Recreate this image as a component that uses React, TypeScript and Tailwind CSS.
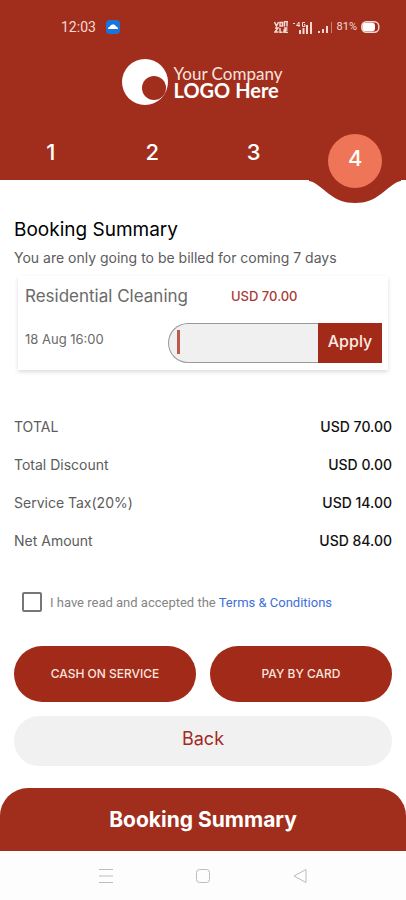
import { ReactNode } from "react";

const steps = [1, 2, 3];

const totals = [
  { label: "TOTAL", amount: "USD 70.00" },
  { label: "Total Discount", amount: "USD 0.00" },
  { label: "Service Tax(20%)", amount: "USD 14.00" },
  { label: "Net Amount", amount: "USD 84.00" },
];

function StatusBar() {
  return (
    <div className="flex h-[54px] items-center justify-between pl-[61px] pr-[26px] text-[#f6d9d2]">
      <div className="flex items-center gap-[10px]">
        <span className="font-[Roboto,sans-serif] text-sm">12:03</span>
        <svg width="14" height="14" viewBox="0 0 14 14" aria-hidden="true">
          <rect width="14" height="14" rx="4" fill="#1b74dc" />
          <path d="M2 9c0-1.500 1-2.300 2-2.500C4.600 5 5.700 4.500 7 4.500s2.400.5 3 2c1 .2 2 1 2 2.500z" fill="#fff" />
        </svg>
      </div>
      <div className="flex items-center gap-1">
        {/* VoLTE badge */}
        <svg width="14" height="12" viewBox="0 0 14 12" fill="none" stroke="currentColor" aria-hidden="true">
          <path d="M.5 1l2 4 2-4M6 1.500h2.500v3.500H6zM10.500 0v5.500M13 0v5.500M10 .6h4M1 7h3L1 11h3.500M6 7v4.300h2.500M10 7h3.500M11.500 7v4.500M13.500 9H10v2.500h4" strokeWidth="1.500" />
        </svg>
        {/* 4G signal */}
        <svg width="22" height="13" viewBox="0 0 22 13" aria-hidden="true">
          <g fill="none" stroke="currentColor" strokeWidth="1">
            <path d="M1 2.500h2M7 6V1L4.500 4.500H8M13 1.500h-2.500v4H13v-2h-1" />
          </g>
          <g fill="currentColor">
            <rect x="7" y="9" width="2" height="4" />
            <rect x="10.500" y="7" width="2" height="6" />
            <rect x="14" y="4" width="2" height="9" />
            <rect x="18" y="1" width="2" height="12" />
          </g>
        </svg>
        <svg width="15" height="13" viewBox="0 0 15 13" fill="currentColor" aria-hidden="true">
          <rect x="0" y="10" width="2" height="2" />
          <rect x="4" y="8" width="2" height="4" />
          <rect x="8" y="5" width="2" height="7" />
          <rect x="13" y="1" width="1" height="11" opacity=".5" />
        </svg>
        <span className="font-[Roboto,sans-serif] text-[11px]">81%</span>
        <svg width="19" height="12" viewBox="0 0 19 12" aria-hidden="true">
          <rect x=".8" y=".8" width="17" height="10.400" rx="4.500" fill="none" stroke="currentColor" strokeWidth="1.400" />
          <rect x="1.500" y="1.800" width="12.500" height="8.400" rx="3" fill="#fff" />
        </svg>
      </div>
    </div>
  );
}

function Logo() {
  return (
    <div className="flex h-14 items-center justify-center gap-[6px] text-white">
      <svg width="46" height="46" viewBox="0 0 46 46" aria-hidden="true">
        <circle cx="23" cy="23" r="23" fill="#fff" />
        <circle cx="32" cy="29" r="12" fill="#a12e1d" />
      </svg>
      <div className="pr-[2px] font-[Lato,sans-serif] leading-4">
        <div className="text-[17px] text-[#f9e3de]">Your Company</div>
        <div className="text-xl leading-4 font-bold">LOGO Here</div>
      </div>
    </div>
  );
}

function Steps() {
  return (
    <ol className="grid h-[70px] grid-cols-4 justify-items-center text-[22px] font-medium text-white">
      {steps.map((step) => (
        <li key={step} className="pt-7 leading-7">{step}</li>
      ))}
      <li className="relative pt-6" aria-current="step">
        {/* Notch below the header for the current step */}
        <svg className="absolute top-[70px] left-1/2 -translate-x-1/2" width="92" height="23" viewBox="0 0 92 23" aria-hidden="true">
          <path d="M0 0h92v1c-6 1-10 5-20 13-8 6-15 9-26 9s-18-3-26-9C10 6 6 2 0 1z" fill="#a12e1d" />
        </svg>
        <span className="relative flex size-[54px] justify-center rounded-full bg-[#ef7558] pt-[10px] leading-7">4</span>
      </li>
    </ol>
  );
}

function PayButton({ children }: { children: ReactNode }) {
  return (
    <button className="h-14 rounded-full bg-[#a12a18] text-xs font-medium text-[#fbe5df]">
      {children}
    </button>
  );
}

export default function App() {
  return (
    <div className="flex min-h-screen flex-col bg-white font-[Inter,sans-serif]">
      <header className="bg-[#a12e1d]">
        <StatusBar />
        <Logo />
        <Steps />
      </header>

      <main className="flex-1 px-[14px] pb-[22px] pt-9">
        <h1 className="text-[19px] leading-7 text-black">Booking Summary</h1>
        <p className="mt-1 text-sm leading-5 text-[#5c5c5c]">
          You are only going to be billed for coming 7 days
        </p>

        <section className="mx-1 mt-2 pb-[7px] pl-[7px] pr-[6px] text-[#6a6a6a] shadow-[0_2px_4px_rgba(0,0,0,0.14)]">
          <div className="grid h-[41px] grid-cols-[206px_1fr] items-center">
            <h2 className="text-[17px]">Residential Cleaning</h2>
            <span className="text-[13px] font-medium text-[#a83a36]">USD 70.00</span>
          </div>
          <div className="mt-[6px] flex h-10">
            <span className="w-[143px] shrink-0 pt-[6px] text-[13px] leading-5">18 Aug 16:00</span>
            <div className="relative min-w-0 flex-1">
              <input
                type="text"
                aria-label="Discount code"
                className="h-full w-full rounded-l-full border border-r-0 border-[#999] bg-[#f0f0f0] px-3 text-sm text-[#333] outline-none"
              />
              <span className="absolute top-[7px] left-[9px] h-6 w-[3px] bg-[#bd5a4e]" />
            </div>
            <button className="w-16 bg-[#a12a18] pb-1 text-base font-medium text-[#fdeae5]">Apply</button>
          </div>
        </section>

        <dl className="mt-[38px]">
          {totals.map((row) => (
            <div key={row.label} className="flex h-[38px] items-center justify-between">
              <dt className="text-sm text-[#5c5c5c]">{row.label}</dt>
              <dd className="text-sm font-medium text-[#111]">{row.amount}</dd>
            </div>
          ))}
        </dl>

        <div className="mt-8 flex h-5 items-center gap-2 pl-2 font-[Roboto,sans-serif] text-[13px] text-[#858585]">
          <input
            id="terms"
            type="checkbox"
            className="size-5 appearance-none rounded-xs border-2 border-[#777] bg-white checked:bg-[#a12a18]"
          />
          <span className="pt-[2px]">
            <label htmlFor="terms">I have read and accepted the </label>
            <a href="#terms" className="text-[#3d6fd9]">Terms &amp; Conditions</a>
          </span>
        </div>

        <div className="mt-[34px] grid grid-cols-2 gap-[14px]">
          <PayButton>CASH ON SERVICE</PayButton>
          <PayButton>PAY BY CARD</PayButton>
        </div>
        <button className="mt-[14px] h-[50px] w-full rounded-full bg-[#f1f1f1] pb-1 text-lg text-[#a12a24]">
          Back
        </button>
      </main>

      <footer className="flex h-[63px] items-center justify-center rounded-t-[28px] bg-[#a12e1d] text-[21px] font-bold text-white">
        Booking Summary
      </footer>

      {/* Android navigation */}
      <nav className="flex h-[49px] items-center justify-center gap-[81px] bg-[#fdfdfd] text-[#bcbcbc]">
        <button aria-label="Recent apps">
          <svg width="16" height="16" viewBox="0 0 16 16" fill="none" stroke="currentColor">
            <path d="M1 1.500h14M1 8h14M1 14.500h14" />
          </svg>
        </button>
        <button aria-label="Home">
          <svg width="16" height="16" viewBox="0 0 16 16" fill="none" stroke="currentColor">
            <rect x="1.500" y="1.500" width="13" height="13" rx="3" />
          </svg>
        </button>
        <button aria-label="Go back">
          <svg width="16" height="16" viewBox="0 0 16 16" fill="none" stroke="currentColor" strokeLinejoin="round">
            <path d="M14 1.500v13L2 8z" />
          </svg>
        </button>
      </nav>
    </div>
  );
}
